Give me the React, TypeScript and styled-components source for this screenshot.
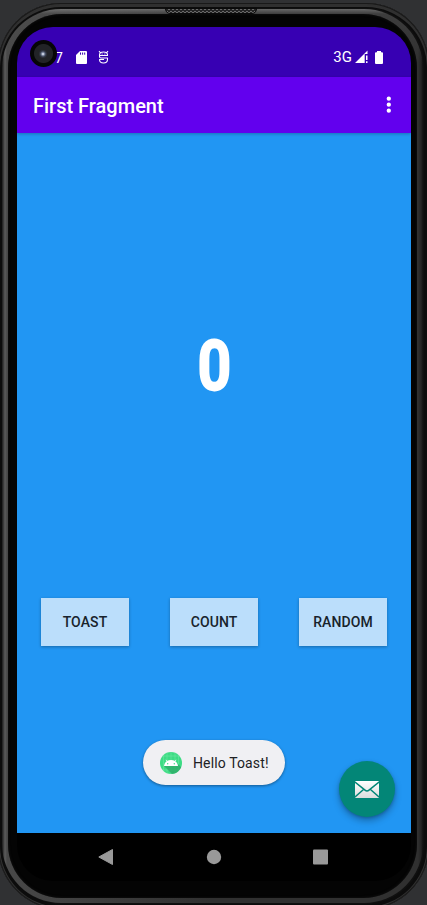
import React from "react";
import styled, { createGlobalStyle } from "styled-components";

const GlobalStyle = createGlobalStyle`
  * { box-sizing: border-box; }
  body { margin: 0; background: #303133; overflow: hidden; font-family: Roboto, sans-serif; }
`;

const Desktop = styled.main`
  width: 427px;
  height: 905px;
  overflow: hidden;
  background: #303133;
  padding-top: 3px;
`;

const Shell = styled.div`
  position: relative;
  width: 431px;
  height: 906px;
  margin-left: -2px;
  padding: 6px 6px 6px 4px;
  border-radius: 63px;
  background: #101010;
  box-shadow: inset 0 0 0 1px #191919, inset 0 0 0 2px #303030, inset 0 2px 0 2px #303030, inset 0 0 0 5px #0c0c0c;
`;

const Rim = styled.div`
  height: 894px;
  padding: 5px 6px 5px 6px;
  border-radius: 59px;
  background:
    linear-gradient(180deg, rgba(150,150,150,.55) 0, rgba(90,90,90,.3) 5px, transparent 55px),
    linear-gradient(90deg, #1c1c1c 0, #303030 1px, #5c5c5c 3px, #484848 5px, #303030 50%, #303030 calc(100% - 5px), #242424 calc(100% - 2px), #111 100%);
`;

const Bezel = styled.div`
  height: 884px;
  padding: 13px 6px 17px 9px;
  border-radius: 54px;
  background: #040404;
  box-shadow: inset 0 0 3px #151515;
`;

const Screen = styled.section`
  display: flex;
  flex-direction: column;
  width: 394px;
  height: 854px;
  overflow: hidden;
  border-radius: 36px;
  background: #000;
`;

const Speaker = styled.div`
  position: absolute;
  top: 5px;
  left: 167px;
  width: 92px;
  height: 6px;
  border: 1px solid #090909;
  border-radius: 0 0 5px 5px;
  background: repeating-conic-gradient(#696969 0 25%, #242424 0 50%) 0 0 / 4px 3px;
`;

const Camera = styled.div`
  position: absolute;
  top: 37px;
  left: 32px;
  display: grid;
  place-items: center;
  width: 27px;
  height: 27px;
  border-radius: 50%;
  background:
    radial-gradient(circle at 13px 14px, #c3cbdc 0 .8px, #66708a 1.8px, #343947 3px, transparent 4.5px),
    radial-gradient(circle, #222327 0 9px, #060606 10px);
`;

const StatusBar = styled.header`
  display: flex;
  align-items: center;
  flex: 0 0 50px;
  padding: 10px 28px 0 38px;
  background: #3700b3;
  color: #fff;
  font-size: 14px;
  line-height: 20px;

  svg { display: block; }
`;

const StatusLeft = styled.div`
  display: flex;
  align-items: center;
  flex: 1;
`;

const Network = styled.span`
  margin-right: 3px;
  font-size: 15px;
`;

const Clock = styled.span`
  padding-top: 2px;
`;

const AppBar = styled.div`
  position: relative;
  z-index: 1;
  display: flex;
  align-items: center;
  justify-content: space-between;
  flex: 0 0 56px;
  padding: 1px 19px 0 16px;
  background: #6200ee;
  box-shadow: 0 1px 3px rgba(0,0,0,.25);
  color: #fff;
`;

const Title = styled.h1`
  margin: 0;
  font-size: 20px;
  font-weight: 500;
  line-height: 24px;
`;

const MenuButton = styled.button`
  display: flex;
  margin: 0 1px 2px 0;
  padding: 0;
  border: 0;
  background: none;
`;

const Content = styled.div`
  position: relative;
  display: flex;
  flex-direction: column;
  flex: 0 0 700px;
  background: #2196f3;
`;

const CounterArea = styled.div`
  display: grid;
  place-items: center;
  height: 464.5px;
  padding: 2px 0 0 1px;
`;

const Counter = styled.strong`
  color: #fff;
  font-size: 71px;
  font-weight: 700;
  line-height: 84px;
  transform: scaleX(.83);
  -webkit-text-stroke: 1.8px #fff;
`;

const Actions = styled.div`
  display: flex;
  justify-content: space-between;
  padding: 0 24px;
`;

const ActionButton = styled.button`
  width: 88px;
  height: 48px;
  padding: 1px 0 0;
  border: 0;
  background: #bbdefb;
  box-shadow: 0 1px 3px rgba(0,0,0,.3);
  color: #18232b;
  font: 500 14px/20px Roboto, sans-serif;
  letter-spacing: .1px;
`;

const Toast = styled.div`
  position: absolute;
  left: 126px;
  top: 607px;
  display: flex;
  align-items: center;
  gap: 11px;
  width: 142px;
  height: 45px;
  padding: 1px 16px 0 17px;
  border-radius: 23px;
  background: #f0f0f3;
  box-shadow: 0 1px 3px rgba(0,0,0,.4);
  color: #202124;
  font-size: 14px;
  white-space: nowrap;

  svg { flex: none; }
`;

const ToastText = styled.span`
  letter-spacing: .13px;
`;

const MailButton = styled.button`
  position: absolute;
  left: 322px;
  top: 628px;
  display: grid;
  place-items: center;
  width: 56px;
  height: 56px;
  padding: 0;
  border: 0;
  border-radius: 50%;
  background: #038677;
  box-shadow: 0 4px 7px rgba(0,0,0,.28), 0 1px 3px rgba(0,0,0,.18);
`;

const Navigation = styled.nav`
  display: flex;
  justify-content: space-between;
  padding: 16px 82px 0 81px;
`;

const StatusIconGap = styled.span`width: 13px;`;
const IconGap = styled.span`width: 11px;`;
const BatteryGap = styled.span`width: 6px;`;

function StorageIcon() {
  return (
    <svg width="11" height="13" viewBox="0 0 11 13">
      <path d="M4 0h6q1 0 1 1v11q0 1-1 1H1q-1 0-1-1V4z" fill="#fff" />
      <path d="M4.5 1.5v2.2M6.6 1.5v2.2M8.7 1.5v2.2" stroke="#3700b3" strokeWidth="1" />
    </svg>
  );
}

function DebugIcon() {
  return (
    <svg width="11" height="14" viewBox="0 0 11 14" fill="none" stroke="#fff" strokeWidth="1.1">
      <path d="M1.500 5.500Q1.200 2 5.500 2t4 3.500zM2.500 2.800 1 1.200M8.500 2.800 10 1.200" />
      <path d="M1.500 5.500v1Q1.500 8 3 8h6.500v1.500q0 3.500-4 3.500t-4-3.500H6" strokeLinejoin="round" />
      <path d="M3.600 4h1M6.400 4h1" />
    </svg>
  );
}

function SignalIcon() {
  return (
    <svg width="14" height="14" viewBox="0 0 14 14">
      <path d="M0 13 12.500.5V4H9.700v9z" fill="#fff" />
      <path d="M11 5.500h1.500v4.500H11zM11 11.300h1.500V13H11z" fill="#fff" />
    </svg>
  );
}

function BatteryIcon() {
  return (
    <svg width="8" height="13" viewBox="0 0 8 13">
      <path d="M2 0h4v1.3h1q1 0 1 1V12q0 1-1 1H1q-1 0-1-1V2.300q0-1 1-1h1z" fill="#fff" />
    </svg>
  );
}

function MoreIcon() {
  return (
    <svg width="5" height="17" viewBox="0 0 5 17" fill="#fff">
      <circle cx="2.800" cy="2.700" r="2.150" /><circle cx="2.800" cy="8.700" r="2.150" /><circle cx="2.800" cy="14.700" r="2.150" />
    </svg>
  );
}

function AndroidIcon() {
  return (
    <svg width="22" height="22" viewBox="0 0 22 22">
      <defs><clipPath id="disc"><circle cx="11" cy="11" r="11" /></clipPath></defs>
      <g clipPath="url(#disc)">
        <path d="M0 0h22v22H0z" fill="#3ddc84" />
        <path d="M3.500 0v22M7 0v22M11 0v22M15 0v22M18.500 0v22M0 4h22M0 18h22" stroke="#7ce9ad" strokeWidth=".45" />
        <path d="m4 14 8 8h10V16l-6.500-6.500z" fill="#2caa67" opacity=".8" />
        <path d="M7 9.500 6 7.800M15 9.500l1-1.700" fill="none" stroke="#fff" strokeWidth=".8" />
        <path d="M4 14c.5-4 3.200-6 7-6s6.500 2 7 6z" fill="#fff" />
        <circle cx="7.700" cy="11.700" r=".7" fill="#3ddc84" /><circle cx="14.300" cy="11.700" r=".7" fill="#3ddc84" />
      </g>
    </svg>
  );
}

function MailIcon() {
  return (
    <svg width="24" height="17" viewBox="0 0 24 17">
      <defs><linearGradient id="paper" x2="0" y2="1"><stop stopColor="#fff" /><stop offset="1" stopColor="#ddd" /></linearGradient></defs>
      <rect width="24" height="17" rx="1" fill="url(#paper)" />
      <path d="m0 1 10 8.200q2 1.600 4 0L24 1M0 16l8.500-7.500M24 16l-8.500-7.500" fill="none" stroke="#038677" strokeWidth="1.500" />
    </svg>
  );
}

export default function App() {
  return (
    <>
      <GlobalStyle />
      <Desktop>
        <Shell>
          <Rim>
            <Bezel>
              <Screen>
                <StatusBar>
                  <StatusLeft>
                    <Clock>7</Clock>
                    <StatusIconGap /><StorageIcon /><IconGap /><DebugIcon />
                  </StatusLeft>
                  <Network>3G</Network><SignalIcon /><BatteryGap /><BatteryIcon />
                </StatusBar>
                <AppBar>
                  <Title>First Fragment</Title>
                  <MenuButton aria-label="More options"><MoreIcon /></MenuButton>
                </AppBar>
                <Content>
                  <CounterArea><Counter>0</Counter></CounterArea>
                  <Actions>
                    {["TOAST", "COUNT", "RANDOM"].map((label) => <ActionButton key={label}>{label}</ActionButton>)}
                  </Actions>
                  <Toast><AndroidIcon /><ToastText>Hello Toast!</ToastText></Toast>
                  <MailButton aria-label="Mail"><MailIcon /></MailButton>
                </Content>
                <Navigation>
                  <svg width="16" height="16" viewBox="0 0 16 16"><path d="M14.500.5v15L.8 8z" fill="#999" stroke="#999" strokeLinejoin="round" /></svg>
                  <svg width="16" height="16" viewBox="0 0 16 16"><circle cx="8" cy="8" r="7.200" fill="#999" /></svg>
                  <svg width="16" height="16" viewBox="0 0 16 16"><rect x="0" y=".5" width="15" height="15" rx="1" fill="#999" /></svg>
                </Navigation>
              </Screen>
            </Bezel>
          </Rim>
          <Speaker />
          <Camera />
        </Shell>
      </Desktop>
    </>
  );
}
